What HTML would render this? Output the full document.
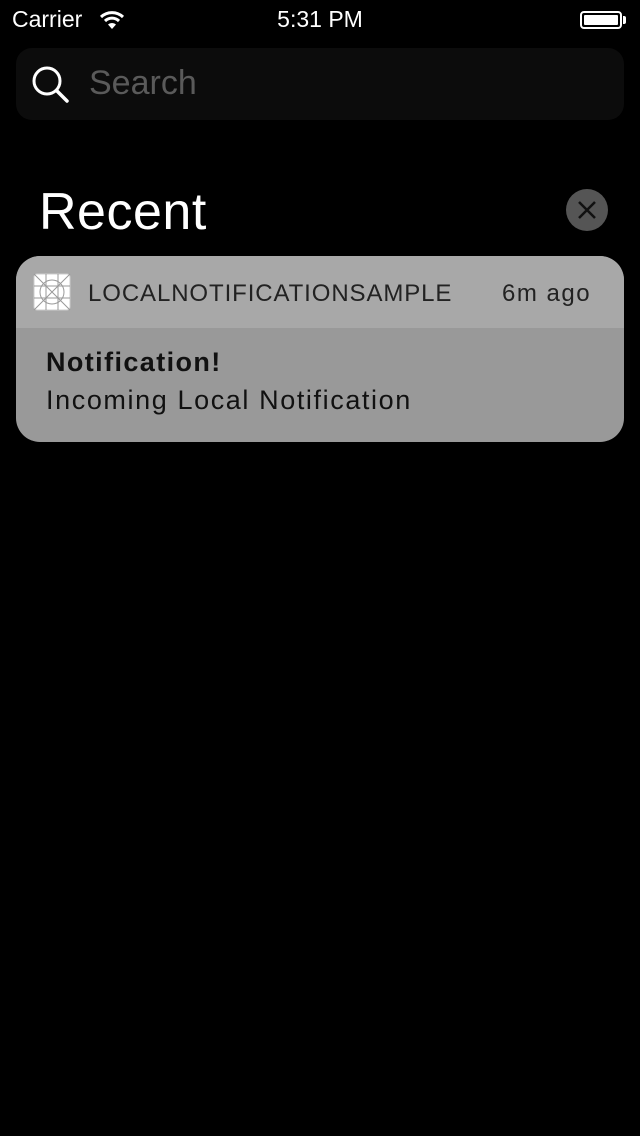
<!DOCTYPE html>
<html><head><style>
body{margin:0;width:640px;height:1136px;background:#000;position:relative;overflow:hidden;font-family:"Liberation Sans",sans-serif;}
.a{position:absolute;white-space:nowrap;}
</style></head><body>
<div class="a" style="left:12px;top:6px;font-size:23px;color:#fff;">Carrier</div>
<svg class="a" style="left:99px;top:9px" width="26" height="22" viewBox="0 0 26 22"><path d="M2 8 A16 16 0 0 1 24 8" stroke="#fff" stroke-width="3" fill="none"/><path d="M6 12 A10 10 0 0 1 20 12" stroke="#fff" stroke-width="3" fill="none"/><path d="M13 20 L9 15.5 A6 6 0 0 1 17 15.5 Z" fill="#fff"/></svg>
<div class="a" style="left:0;width:640px;text-align:center;top:6px;font-size:23px;color:#fff;">5:31 PM</div>
<div class="a" style="left:580px;top:11px;width:42px;height:18px;border:2px solid #fff;border-radius:4px;box-sizing:border-box;padding:2px"><div style="background:#fff;width:100%;height:100%;border-radius:1px"></div></div>
<div class="a" style="left:623px;top:16px;width:3px;height:8px;background:#fff;border-radius:0 2px 2px 0"></div>
<div class="a" style="left:16px;top:48px;width:608px;height:72px;background:#0c0c0c;border-radius:16px"></div>
<svg class="a" style="left:30px;top:64px" width="40" height="40" viewBox="0 0 40 40"><circle cx="17" cy="17" r="13" stroke="#fff" stroke-width="3" fill="none"/><path d="M26.5 26.5 L37 37" stroke="#fff" stroke-width="3.5" stroke-linecap="round"/></svg>
<div class="a" style="left:89px;top:64px;font-size:34px;color:#5a5a5a;">Search</div>
<div class="a" style="left:39px;top:182px;font-size:52px;color:#fff;letter-spacing:0.5px">Recent</div>
<div class="a" style="left:566px;top:189px;width:42px;height:42px;border-radius:50%;background:#555"></div>
<svg class="a" style="left:566px;top:189px" width="42" height="42"><path d="M13 13 L29 29 M29 13 L13 29" stroke="#111" stroke-width="2.5"/></svg>
<div class="a" style="left:16px;top:256px;width:608px;height:186px;border-radius:24px;overflow:hidden;background:#999">
<div style="height:72px;background:#a8a8a8"></div></div>
<svg class="a" style="left:33px;top:273px" width="38" height="38" viewBox="0 0 38 38"><rect x="1" y="1" width="36" height="36" rx="3" fill="#fff" stroke="#ccc"/><g stroke="#999" stroke-width="1" fill="none"><path d="M1 1L37 37M37 1L1 37M13 1V37M25 1V37M1 13H37M1 25H37"/><circle cx="19" cy="19" r="12"/></g></svg>
<div class="a" style="left:88px;top:280px;font-size:24px;color:#222;letter-spacing:0.9px">LOCALNOTIFICATIONSAMPLE</div>
<div class="a" style="left:502px;top:280px;font-size:24px;color:#222;letter-spacing:1.5px">6m ago</div>
<div class="a" style="left:46px;top:347px;font-size:27px;font-weight:bold;color:#111;letter-spacing:1.4px">Notification!</div>
<div class="a" style="left:46px;top:385px;font-size:27px;color:#111;letter-spacing:1.6px">Incoming Local Notification</div>
</body></html>
